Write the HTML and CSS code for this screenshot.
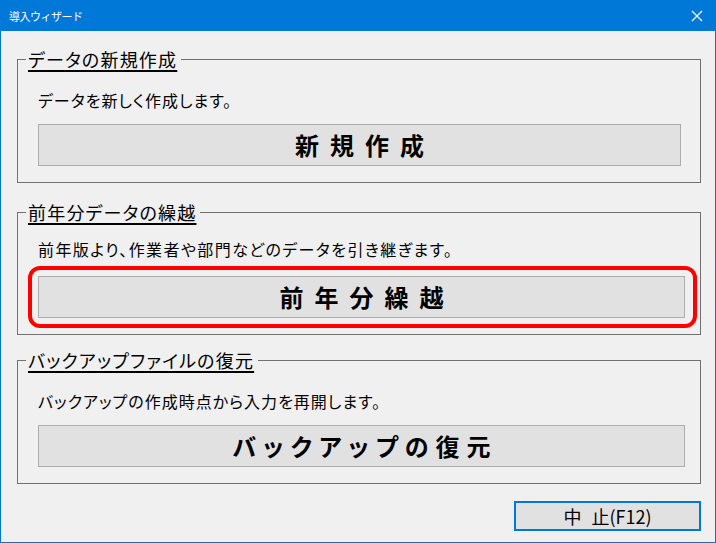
FILE: index.html
```html
<!DOCTYPE html>
<html lang="ja">
<head>
<meta charset="utf-8">
<title>導入ウィザード</title>
<link rel="stylesheet" href="styles.css">
</head>
<body>
<div class="window">
  <div class="titlebar">
    <span class="title">導入ウィザード</span>
    <svg class="close" width="12" height="12" viewBox="0 0 12 12"><path d="M1 1 L11 11 M11 1 L1 11" stroke="#fff" stroke-width="1.2" fill="none"/></svg>
  </div>
  <div class="content">
    <fieldset class="group g1">
      <legend>データの新規作成</legend>
      <div class="body">
        <p class="desc">データを新しく作成します。</p>
        <button class="big">新規作成</button>
      </div>
    </fieldset>
    <fieldset class="group g2">
      <legend>前年分データの繰越</legend>
      <div class="body">
        <p class="desc">前年版より、作業者や部門などのデータを引き継ぎます。</p>
        <div class="highlight"><button class="big">前年分繰越</button></div>
      </div>
    </fieldset>
    <fieldset class="group g3">
      <legend>バックアップファイルの復元</legend>
      <div class="body">
        <p class="desc">バックアップの作成時点から入力を再開します。</p>
        <button class="big narrow">バックアップの復元</button>
      </div>
    </fieldset>
    <div class="footer">
      <button class="cancel"><span class="gap">中</span>止(F12)</button>
    </div>
  </div>
</div>
</body>
</html>
```
FILE: styles.css
```css
* { box-sizing: border-box; }
html, body { margin: 0; padding: 0; }
body {
  width: 716px;
  height: 543px;
  overflow: hidden;
  font-family: "Noto Sans CJK JP", "Noto Sans", sans-serif;
  color: #000;
}
.window {
  width: 716px;
  height: 543px;
  background: #f0f0f0;
  border: 1px solid #0078d7;
  border-top: none;
  display: flex;
  flex-direction: column;
}
.titlebar {
  height: 31px;
  margin: 0 -1px;
  background: #0078d7;
  color: #fff;
  display: flex;
  align-items: center;
  justify-content: space-between;
  padding: 0 13px 0 9px;
}
.title {
  font-size: 11px;
  letter-spacing: -0.5px;
}
.close { display: block; }
.content {
  padding: 17px 14px 0 16px;
  display: flex;
  flex-direction: column;
}
.group {
  margin: 0;
  border: 1px solid #707070;
  padding: 0;
  min-width: 0;
  font-feature-settings: "palt";
}
.group legend {
  margin-left: 8px;
  padding: 0 4px 0 2px;
  font-size: 18px;
  line-height: 22px;
  text-decoration: underline;
  text-decoration-thickness: 2px;
  text-underline-offset: 3px;
  letter-spacing: 1.2px;
}
.body {
  padding: 18px 15px 16px 20px;
}
.g1 .body { padding-right: 19px; }
.g2 { margin-top: 18px; }
.g3 { margin-top: 14px; }
.desc {
  margin: 0 0 12px 0;
  font-size: 16px;
  line-height: 24px;
  letter-spacing: 1px;
}
.g2 .body { padding-top: 14px; }
.g2 .desc { margin-bottom: 15px; letter-spacing: 1.4px; }
.big {
  display: block;
  width: 100%;
  height: 42px;
  background: #e1e1e1;
  border: 1px solid #adadad;
  font-family: "Noto Sans CJK JP", sans-serif;
  font-size: 24px;
  font-weight: 700;
  letter-spacing: 11px;
  text-indent: 11px;
  color: #000;
  padding: 0;
  line-height: 40px;
  font-feature-settings: "palt";
}
.big.narrow {
  letter-spacing: 7px;
  text-indent: 7px;
}
.highlight {
  margin: -10px -12px -10px -10px;
  border: 4px solid #ff0000;
  border-radius: 12px;
  padding: 6px 8px 6px 6px;
}
.footer {
  display: flex;
  justify-content: flex-end;
  margin-top: 17px;
}
.cancel {
  width: 187px;
  height: 30px;
  background: #e1e1e1;
  border: 2px solid #0078d7;
  font-family: "Noto Sans CJK JP", sans-serif;
  font-size: 18px;
  line-height: 24px;
  padding: 0;
  color: #000;
}
.cancel .gap { margin-right: 10px; }
```
